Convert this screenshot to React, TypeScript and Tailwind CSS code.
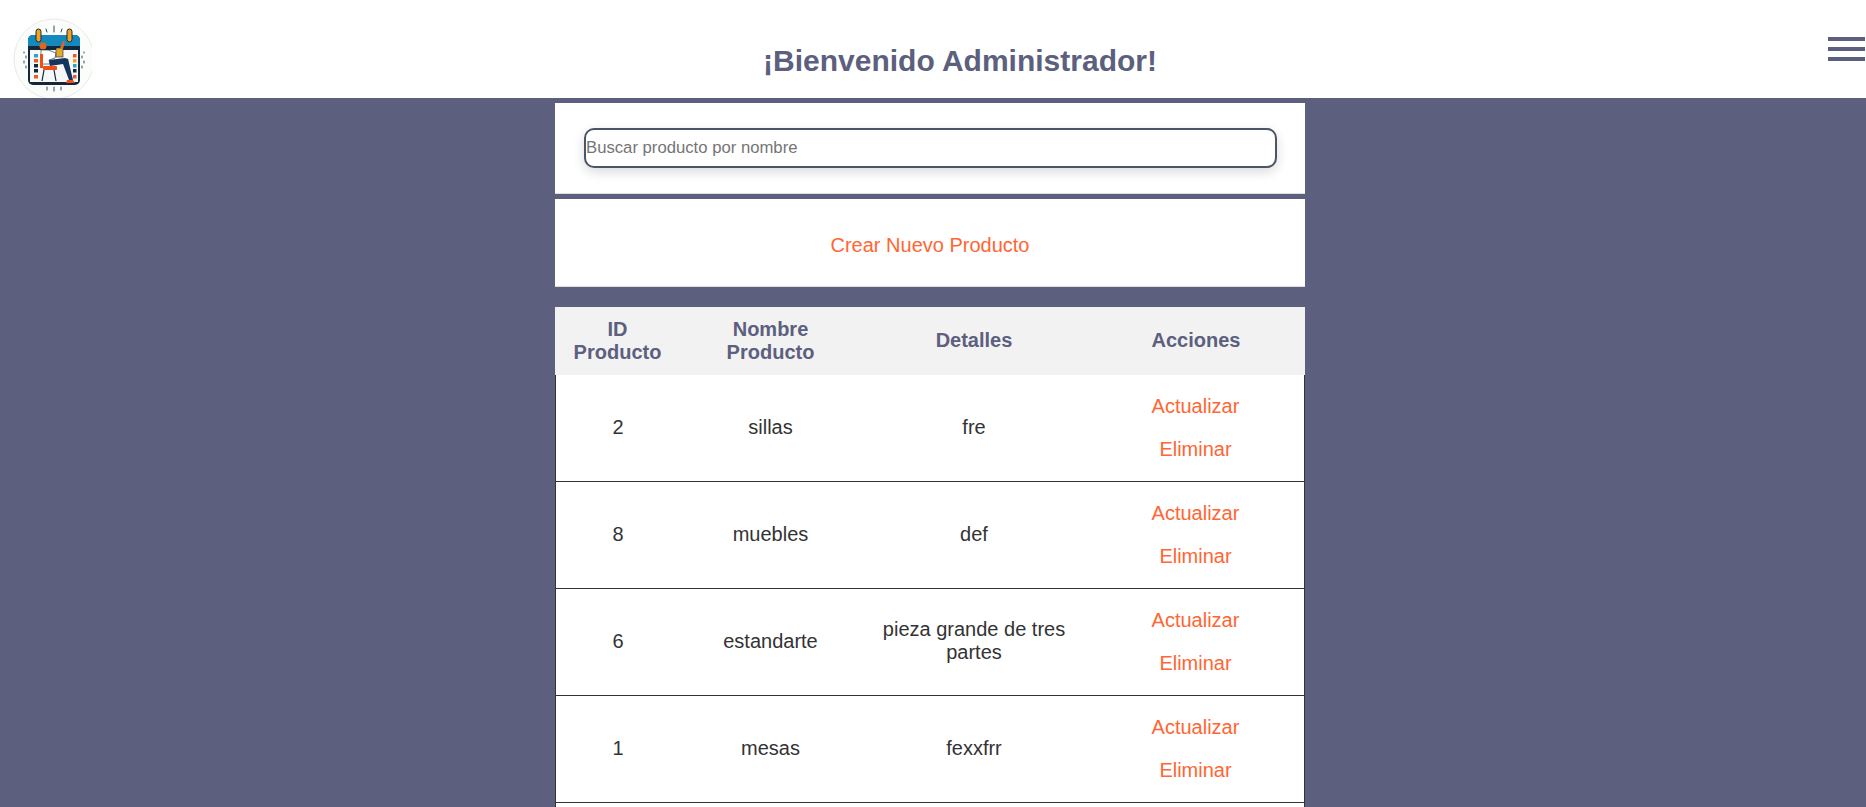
const productos = [
  { id: 2, nombre: "sillas", detalles: "fre" },
  { id: 8, nombre: "muebles", detalles: "def" },
  { id: 6, nombre: "estandarte", detalles: "pieza grande de tres partes" },
  { id: 1, nombre: "mesas", detalles: "fexxfrr" },
];

function Logo() {
  return (
    <svg viewBox="0 0 92 98" className="h-[98px] w-[92px] shrink-0">
      <circle cx="54" cy="59" r="40" fill="#fbfdfb" stroke="#dfe5e0" strokeWidth="0.8" />
      <g stroke="#33465a" strokeWidth="1" strokeLinecap="round">
        <path d="M54 26v6M46 29l1 3M62 29l-1 3" />
        <path d="M54 87v4M47 87l0 3M61 87l0 3" />
        <path d="M24 52v1M26 56v2M24 61v2M26 66v2M84 52v1M82 56v2M84 61v2M82 66v2" />
      </g>
      <rect x="28" y="35" width="52" height="50" rx="5" fill="#14283c" />
      <path d="M28 46V40a5 5 0 0 1 5-5h42a5 5 0 0 1 5 5v6z" fill="#1389bd" />
      <rect x="30" y="50" width="48" height="32" fill="#f7f8f8" />
      <rect x="36" y="29" width="5" height="13" rx="2.5" fill="#f5a21b" stroke="#14283c" />
      <rect x="67" y="29" width="5" height="13" rx="2.5" fill="#f5a21b" stroke="#14283c" />
      <g>
        <rect x="34" y="54" width="4" height="3.5" fill="#2ba3cf" />
        <rect x="34" y="59" width="4" height="3.5" fill="#ef5a24" />
        <rect x="34" y="64" width="4" height="3.5" fill="#14283c" />
        <rect x="34" y="69" width="4" height="3.5" fill="#14283c" />
        <rect x="34" y="75" width="4" height="3.5" fill="#ef5a24" />
        <rect x="65" y="59" width="3.5" height="3.5" fill="#f5c21b" />
        <rect x="73" y="54" width="3.5" height="3.5" fill="#ef5a24" />
        <rect x="73" y="59" width="3.5" height="3.5" fill="#f5a21b" />
        <rect x="73" y="64" width="3.5" height="3.5" fill="#2ba3cf" />
        <rect x="73" y="69" width="3.5" height="3.5" fill="#14283c" />
        <rect x="73" y="75" width="3.5" height="3.5" fill="#ef5a24" />
      </g>
      <circle cx="43" cy="46" r="3.5" fill="#e8641c" />
      <path d="M41 50h7l8 3-1 5-6 2 1 4h-9z" fill="#ffffff" stroke="#14283c" strokeWidth="0.6" />
      <rect x="40" y="54" width="3" height="14" fill="#ef4e16" />
      <rect x="43" y="66" width="14" height="4" rx="1" fill="#ef4e16" />
      <path d="M49 60l16-2 3 1 5 21h-4l-6-16-13 2z" fill="#14365c" />
      <rect x="56" y="48" width="7" height="9" fill="#e3a92f" stroke="#14283c" strokeWidth="0.6" />
      <path d="M60 48l3-7 2 1-2 7z" fill="#e8641c" />
      <path d="M44 70l-2 11M54 70l2 11" stroke="#14283c" strokeWidth="1.2" fill="none" />
      <path d="M67 80h6l2 3h-9z" fill="#ef4e16" />
    </svg>
  );
}

export default function App() {
  return (
    <div className="h-screen overflow-hidden bg-[#5c5f7e] font-['Liberation_Sans',Arial,sans-serif] text-[#333]">
      <header className="flex h-[98px] items-start justify-between bg-white pr-px">
        <Logo />
        <h1 className="mt-[41px] text-[30px] leading-[40px] font-bold text-[#5c5f7e]">¡Bienvenido Administrador!</h1>
        <button type="button" aria-label="Menú" className="mt-[37px] flex w-[37px] flex-col gap-[6px]">
          <span className="h-1 bg-[#5c5f7e]" />
          <span className="h-1 bg-[#5c5f7e]" />
          <span className="h-1 bg-[#5c5f7e]" />
        </button>
      </header>

      <div className="pr-[6px]">
        <main className="mx-auto mt-[5px] w-[750px]">
          <div className="h-[91px] border-b border-[#ddd] bg-white px-[29px] pt-[25px]">
            <input
              type="text"
              placeholder="Buscar producto por nombre"
              className="h-[40px] w-[693px] rounded-[10px] border-2 border-[#4a5568] bg-white px-0 text-[16.7px] text-[#333] shadow-[0_4px_12px_rgba(0,0,0,0.15)] outline-none placeholder:text-[#757575]"
            />
          </div>

          <div className="mt-[5px] flex h-[88px] items-center justify-center border-b border-[#ddd] bg-white pt-1">
            <a href="#" className="text-[20px] text-[#ff6633]">Crear Nuevo Producto</a>
          </div>

          <table className="mt-[20px] w-[750px] table-fixed border-separate border-spacing-0 bg-white text-center text-[20px]">
            <thead>
              <tr className="h-[68px] bg-[#f2f2f2] text-[#5c5f7e]">
                <th className="w-[125px] leading-[23px] font-bold">ID<br />Producto</th>
                <th className="w-[181px] leading-[23px] font-bold">Nombre<br />Producto</th>
                <th className="w-[226px] pb-px leading-[23px] font-bold">Detalles</th>
                <th className="w-[218px] pb-px leading-[23px] font-bold">Acciones</th>
              </tr>
            </thead>
            <tbody>
              {productos.map((p) => (
                <tr key={p.id} className="h-[107px]">
                  <td className="border-b border-l border-[#333] pb-[2px]">{p.id}</td>
                  <td className="border-b border-[#333] pb-[2px]">{p.nombre}</td>
                  <td className="border-b border-[#333] px-5 pb-[2px] leading-[23px]">{p.detalles}</td>
                  <td className="border-r border-b border-[#333]">
                    <div className="flex flex-col items-center gap-[20px] leading-[23px] text-[#ff6633]">
                      <a href="#">Actualizar</a>
                      <a href="#">Eliminar</a>
                    </div>
                  </td>
                </tr>
              ))}
              <tr className="h-[107px]">
                <td className="border-l border-[#333]" />
                <td />
                <td />
                <td className="border-r border-[#333]" />
              </tr>
            </tbody>
          </table>
        </main>
      </div>
    </div>
  );
}
